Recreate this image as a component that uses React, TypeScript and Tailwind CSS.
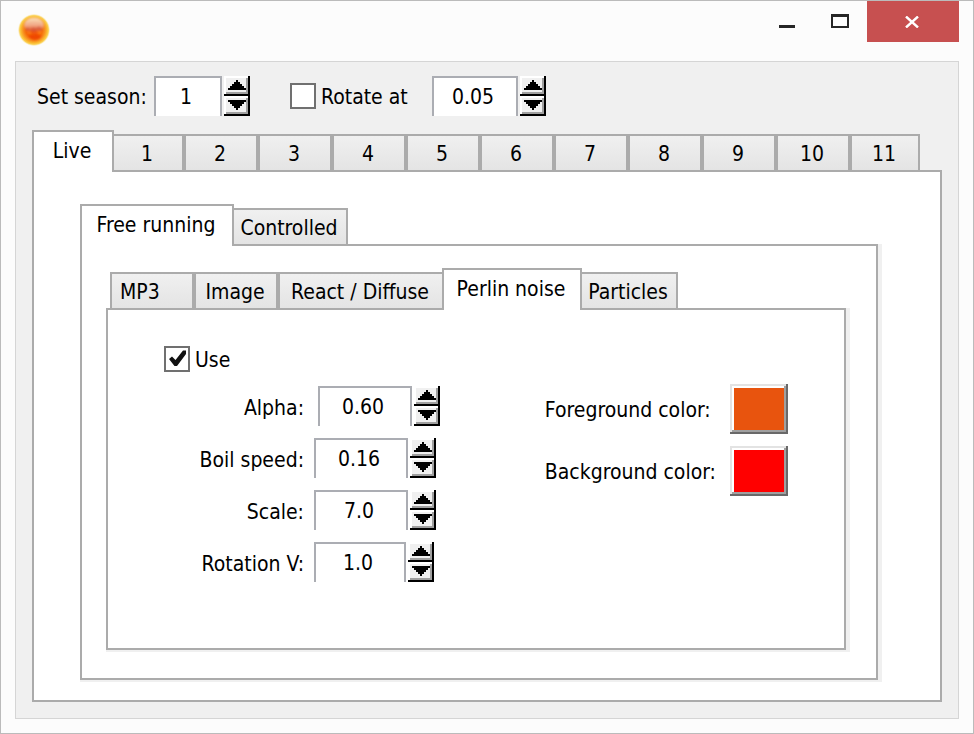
import { useState, type ReactNode } from "react";

function SunIcon() {
  return (
    <svg viewBox="0 0 32 32" className="h-8 w-8" aria-hidden="true">
      <defs>
        <radialGradient id="sun-body" cx="50%" cy="50%" r="50%">
          <stop offset="0" stopColor="#f04a00" />
          <stop offset="0.5" stopColor="#f56a08" />
          <stop offset="0.68" stopColor="#f89020" />
          <stop offset="0.8" stopColor="#fab42c" />
          <stop offset="0.9" stopColor="#fbd050" />
          <stop offset="1" stopColor="#fcecc0" stopOpacity="0.3" />
        </radialGradient>
        <linearGradient id="sun-gloss" x1="0" y1="0" x2="0" y2="1">
          <stop offset="0" stopColor="#fbe6c4" stopOpacity="0.95" />
          <stop offset="0.55" stopColor="#f0b098" stopOpacity="0.85" />
          <stop offset="1" stopColor="#e0704c" stopOpacity="0.2" />
        </linearGradient>
        <filter id="sun-soft">
          <feGaussianBlur stdDeviation="0.8" />
        </filter>
      </defs>
      <circle cx="16" cy="16" r="16" fill="url(#sun-body)" />
      <g filter="url(#sun-soft)">
        <ellipse cx="16" cy="11" rx="10" ry="7.5" fill="url(#sun-gloss)" />
        <path d="M7 15l3-2 2 2 3-2 3 1 3-2 4 3-3 2-3-1-3 2-4-2-3 1z" fill="#cf4d3c" opacity="0.6" />
        <path d="M9 19l5 2 4-1 6 1-3 4-5 1-4-2z" fill="#ee4400" opacity="0.9" />
        <path d="M9 17l4 2-2 2zM20 17l4 1-3 3z" fill="#ff8a1a" opacity="0.9" />
      </g>
    </svg>
  );
}

function Arrow({ down = false }: { down?: boolean }) {
  return (
    <svg
      width="18"
      height="10"
      viewBox="0 0 18 10"
      shapeRendering="crispEdges"
      className={down ? "block rotate-180" : "block"}
      aria-hidden="true"
    >
      <path d="M8 0h2v2h2v2h2v2h2v2h2v2H0V8h2V6h2V4h2V2h2z" fill="#000" />
    </svg>
  );
}

function StepButton({ label, down = false, onClick }: { label: string; down?: boolean; onClick: () => void }) {
  return (
    <button
      type="button"
      aria-label={label}
      onClick={onClick}
      className="flex h-5 w-[26px] items-start bg-[#f0f0f0] pt-1 pl-1 shadow-[inset_-2px_-2px_#000,inset_2px_2px_#fff,inset_-4px_-4px_#a0a0a0]"
    >
      <Arrow down={down} />
    </button>
  );
}

function Spinner({
  id,
  initial,
  step,
  digits,
  width,
}: {
  id: string;
  initial: number;
  step: number;
  digits: number;
  width: string;
}) {
  const [value, setValue] = useState(initial.toFixed(digits));
  const change = (by: number) => setValue((Number(value) + by).toFixed(digits));
  return (
    <div className="flex gap-[2px]">
      <input
        id={id}
        type="text"
        value={value}
        onChange={(e) => setValue(e.target.value)}
        className={`h-10 border-x-2 border-t-2 border-[#abadb3] bg-white pr-1 text-center outline-none ${width}`}
      />
      <div className="flex flex-col">
        <StepButton label="Increase" onClick={() => change(step)} />
        <StepButton label="Decrease" down onClick={() => change(-step)} />
      </div>
    </div>
  );
}

function CheckBox({ id, initial = false }: { id: string; initial?: boolean }) {
  const [checked, setChecked] = useState(initial);
  return (
    <span className="relative block h-[26px] w-[26px] shrink-0">
      <input
        id={id}
        type="checkbox"
        checked={checked}
        onChange={(e) => setChecked(e.target.checked)}
        className="block h-[26px] w-[26px] appearance-none border-2 border-[#707070] bg-white"
      />
      {checked && (
        <svg viewBox="0 0 26 26" className="pointer-events-none absolute inset-0" aria-hidden="true">
          <path d="M5 13l3-2.5 3.5 3.5L19 4.5h3V8L13 20h-2.5z" fill="#111" />
        </svg>
      )}
    </span>
  );
}

type TabItem = { name: string; width: string; align?: string };

function Tabs({ items, active, indent = "" }: { items: TabItem[]; active: number; indent?: string }) {
  const [current, setCurrent] = useState(active);
  return (
    <div role="tablist" className={`relative z-10 -mb-[2px] flex items-end ${indent}`}>
      {items.map((tab, i) => {
        const look =
          i === current
            ? "h-[42px] border-x-2 border-t-2 bg-white pb-[2px]"
            : `h-[38px] border-y-2 bg-linear-to-b from-[#f0f0f0] to-[#e4e4e4] pt-[2px] ${
                i === current + 1 ? "" : "border-l-2"
              } ${i === current - 1 ? "" : "border-r-2"}`;
        return (
          <button
            key={tab.name}
            type="button"
            role="tab"
            aria-selected={i === current}
            onClick={() => setCurrent(i)}
            className={`border-[#ababab] leading-8 whitespace-nowrap ${tab.align ?? "pr-[2px] text-center"} ${tab.width} ${look}`}
          >
            {tab.name}
          </button>
        );
      })}
    </div>
  );
}

function ShadedPanel({ children, className }: { children: ReactNode; className: string }) {
  return (
    <div className="bg-[#f0f0f0] pr-1 pb-[2px]">
      <div role="tabpanel" className={`border-2 border-[#ababab] bg-white ${className}`}>
        {children}
      </div>
    </div>
  );
}

function ColorRow({ id, label, color }: { id: string; label: string; color: string }) {
  return (
    <div className="flex items-center justify-between gap-[14px]">
      <label htmlFor={id} className="pt-[2px] whitespace-nowrap">
        {label}
      </label>
      <button
        id={id}
        type="button"
        className={`h-[50px] w-[58px] shadow-[inset_-2px_-2px_#696969,inset_2px_2px_#e3e3e3,inset_-4px_-4px_#a0a0a0,inset_4px_4px_#fff] ${color}`}
      />
    </div>
  );
}

const seasonTabs: TabItem[] = [
  { name: "Live", width: "w-[82px]" },
  { name: "1", width: "w-[70px]" },
  { name: "2", width: "w-[74px]" },
  { name: "3", width: "w-[74px]" },
  { name: "4", width: "w-[74px]" },
  { name: "5", width: "w-[74px]" },
  { name: "6", width: "w-[74px]" },
  { name: "7", width: "w-[74px]" },
  { name: "8", width: "w-[74px]" },
  { name: "9", width: "w-[74px]" },
  { name: "10", width: "w-[74px]" },
  { name: "11", width: "w-[70px]" },
];

const modeTabs: TabItem[] = [
  { name: "Free running", width: "w-[154px]" },
  { name: "Controlled", width: "w-[114px]" },
];

const effectTabs: TabItem[] = [
  { name: "MP3", width: "w-[84px]", align: "pl-2 text-left" },
  { name: "Image", width: "w-[84px]" },
  { name: "React / Diffuse", width: "w-[164px]" },
  { name: "Perlin noise", width: "w-[140px]" },
  { name: "Particles", width: "w-[96px]" },
];

const settings = [
  { id: "alpha", label: "Alpha:", value: 0.6, step: 0.01, digits: 2, gap: "gap-[14px]", width: "w-[94px]" },
  { id: "boil", label: "Boil speed:", value: 0.16, step: 0.01, digits: 2, gap: "gap-[10px]", width: "w-[94px]" },
  { id: "scale", label: "Scale:", value: 7, step: 0.1, digits: 1, gap: "gap-[10px]", width: "w-[94px]" },
  { id: "rotation", label: "Rotation V:", value: 1, step: 0.1, digits: 1, gap: "gap-[10px]", width: "w-[92px]" },
];

export default function App() {
  return (
    <div className="flex min-h-screen flex-col border border-[#bbbbbb] bg-[#fcfcfc] font-['DejaVu_Sans_Condensed','DejaVu_Sans',sans-serif] text-[21px] leading-7 text-black">
      <header className="flex h-[60px] items-start px-[14px]">
        <div className="pt-[13px] pl-[3px]">
          <SunIcon />
        </div>
        <div className="ml-auto flex">
          <button type="button" aria-label="Minimize" className="flex h-[41px] w-[52px] justify-center pt-6">
            <span className="h-[3px] w-4 bg-[#262626]" />
          </button>
          <button type="button" aria-label="Maximize" className="flex h-[41px] w-[54px] justify-center pt-[13px]">
            <span className="h-[14px] w-[18px] border-2 border-t-[3px] border-[#262626]" />
          </button>
          <button
            type="button"
            aria-label="Close"
            className="flex h-[41px] w-[92px] items-center justify-center bg-[#c75050] pr-[2px]"
          >
            <svg width="14" height="12" viewBox="0 0 14 12" aria-hidden="true">
              <path d="M1 0.5L13 11.5M13 0.5L1 11.5" stroke="#fff" strokeWidth="2.4" />
            </svg>
          </button>
        </div>
      </header>

      <main className="mx-[14px] mb-[14px] grow border border-[#d5d5d5] bg-[#f0f0f0] px-4 pt-[14px] pb-4">
        <div className="flex items-center pl-[5px]">
          <label htmlFor="season" className="w-[117px] pt-[2px] whitespace-nowrap">
            Set season:
          </label>
          <Spinner id="season" initial={1} step={1} digits={0} width="w-[68px]" />
          <div className="ml-10 flex items-center gap-[5px]">
            <CheckBox id="rotate" />
            <label htmlFor="rotate" className="w-[111px] pt-[2px] whitespace-nowrap">
              Rotate at
            </label>
          </div>
          <Spinner id="rotate-at" initial={0.05} step={0.01} digits={2} width="w-[86px]" />
        </div>

        <div className="mt-[14px]">
          <Tabs items={seasonTabs} active={0} />
          <div
            role="tabpanel"
            className="border-2 border-[#ababab] bg-white pt-8 pr-[58px] pb-[18px] pl-[46px]"
          >
            <Tabs items={modeTabs} active={0} />
            <ShadedPanel className="pt-[22px] pr-[26px] pb-[26px] pl-6">
              <Tabs items={effectTabs} active={3} indent="pl-1" />
              <ShadedPanel className="flex justify-between px-14 pt-9 pb-[66px]">
                <div>
                  <div className="flex h-[26px] items-center gap-[5px]">
                    <CheckBox id="use" initial />
                    <label htmlFor="use" className="pt-[2px]">
                      Use
                    </label>
                  </div>
                  <div className="mt-[14px] flex flex-col gap-3">
                    {settings.map((s) => (
                      <div key={s.id} className={`flex items-center ${s.gap}`}>
                        <label htmlFor={s.id} className="w-[140px] pt-1 text-right whitespace-nowrap">
                          {s.label}
                        </label>
                        <Spinner id={s.id} initial={s.value} step={s.step} digits={s.digits} width={s.width} />
                      </div>
                    ))}
                  </div>
                </div>
                <div className="flex flex-col gap-3 pt-[38px]">
                  <ColorRow id="foreground" label="Foreground color:" color="bg-[#e8540e]" />
                  <ColorRow id="background" label="Background color:" color="bg-[#ff0000]" />
                </div>
              </ShadedPanel>
            </ShadedPanel>
          </div>
        </div>
      </main>
    </div>
  );
}
